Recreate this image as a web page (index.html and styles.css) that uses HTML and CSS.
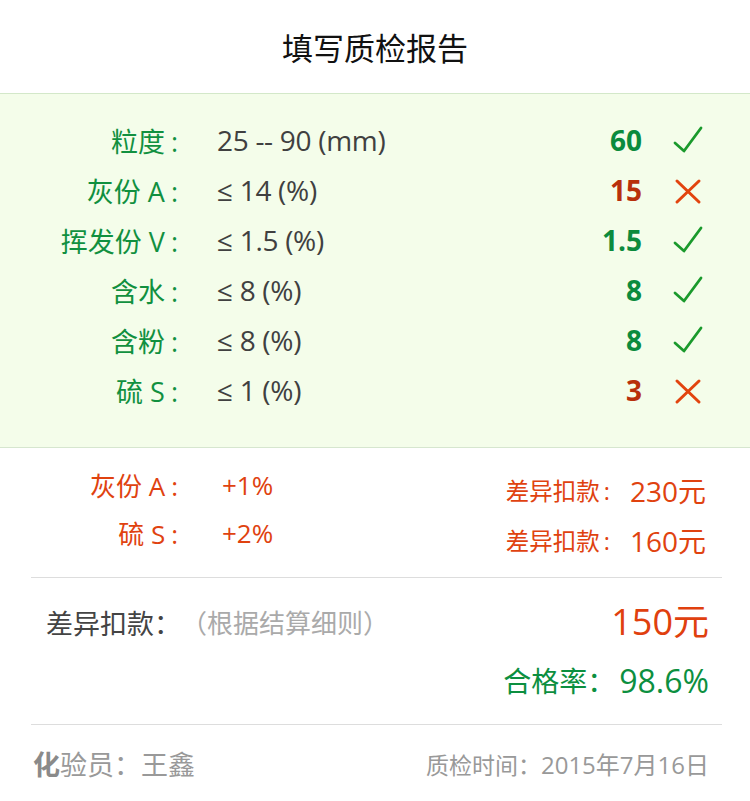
FILE: index.html
```html
<!DOCTYPE html>
<html lang="zh">
<head>
<meta charset="utf-8">
<link rel="stylesheet" href="styles.css">
</head>
<body>
<div class="page">
  <header class="title-bar">填写质检报告</header>

  <section class="checks">
    <div class="row">
      <span class="lbl">粒度<i>:</i></span><span class="std">25 -- 90 (mm)</span><span class="res ok">60</span>
      <svg class="ico" viewBox="0 0 32 32"><path class="ck" d="M3 19 L12 27 L29 4"/></svg>
    </div>
    <div class="row">
      <span class="lbl">灰份 A<i>:</i></span><span class="std">≤ 14 (%)</span><span class="res bad">15</span>
      <svg class="ico" viewBox="0 0 32 32"><path class="x" d="M5 7 L27 28 M27 7 L5 28"/></svg>
    </div>
    <div class="row">
      <span class="lbl">挥发份 V<i>:</i></span><span class="std">≤ 1.5 (%)</span><span class="res ok">1.5</span>
      <svg class="ico" viewBox="0 0 32 32"><path class="ck" d="M3 19 L12 27 L29 4"/></svg>
    </div>
    <div class="row">
      <span class="lbl">含水<i>:</i></span><span class="std">≤ 8 (%)</span><span class="res ok">8</span>
      <svg class="ico" viewBox="0 0 32 32"><path class="ck" d="M3 19 L12 27 L29 4"/></svg>
    </div>
    <div class="row">
      <span class="lbl">含粉<i>:</i></span><span class="std">≤ 8 (%)</span><span class="res ok">8</span>
      <svg class="ico" viewBox="0 0 32 32"><path class="ck" d="M3 19 L12 27 L29 4"/></svg>
    </div>
    <div class="row">
      <span class="lbl">硫 S<i>:</i></span><span class="std">≤ 1 (%)</span><span class="res bad">3</span>
      <svg class="ico" viewBox="0 0 32 32"><path class="x" d="M5 7 L27 28 M27 7 L5 28"/></svg>
    </div>
  </section>

  <section class="diffs">
    <div class="diff-left">
      <div class="drow"><span class="dlbl">灰份 A<i>:</i></span><span class="dval">+1%</span></div>
      <div class="drow"><span class="dlbl">硫 S<i>:</i></span><span class="dval">+2%</span></div>
    </div>
    <div class="diff-right">
      <div class="mrow"><span class="mlbl">差异扣款<i>:</i></span><span class="mval">230元</span></div>
      <div class="mrow"><span class="mlbl">差异扣款<i>:</i></span><span class="mval">160元</span></div>
    </div>
  </section>

  <section class="total">
    <div class="trow">
      <span class="tlbl">差异扣款：</span><span class="tnote">（根据结算细则）</span>
      <span class="tval">150元</span>
    </div>
    <div class="rate"><span class="rlbl">合格率：</span><span class="rval">98.6%</span></div>
  </section>

  <footer class="foot">
    <span class="inspector"><b>化</b>验员：王鑫</span>
    <span class="time">质检时间：<span class="date">2015年7月16日</span></span>
  </footer>
</div>
</body>
</html>
```

FILE: styles.css
```css
html, body {
  margin: 0;
  padding: 0;
  background: #ffffff;
}
body {
  font-family: "Open Sans", "Noto Sans CJK SC", sans-serif;
}
.page {
  width: 750px;
}
.title-bar {
  height: 93px;
  display: flex;
  align-items: center;
  justify-content: center;
  font-family: "Noto Sans CJK SC", sans-serif;
  font-size: 31px;
  color: #111;
  border-bottom: 1px solid #d3e8c9;
}
.checks {
  background: #f4fdea;
  padding: 21px 0 32px;
  border-bottom: 1px solid #d6e6cf;
}
.row {
  height: 50px;
  display: flex;
  align-items: center;
}
.lbl {
  width: 178px;
  text-align: right;
  font-size: 27px;
  color: #11903f;
}
.lbl i, .dlbl i, .mlbl i {
  font-style: normal;
  margin-left: 6px;
}
.std {
  margin-left: 39px;
  width: 300px;
  font-size: 28px;
  color: #404040;
  letter-spacing: -0.3px;
}
.res {
  width: 125px;
  text-align: right;
  font-size: 28px;
  font-weight: 700;
}
.res.ok { color: #0b8b3d; }
.res.bad { color: #b8300c; }
.ico {
  width: 32px;
  height: 32px;
  margin-left: 30px;
}
.ck {
  fill: none;
  stroke: #1a9a2c;
  stroke-width: 2.8;
  stroke-linecap: round;
  stroke-linejoin: round;
}
.x {
  fill: none;
  stroke: #e2440f;
  stroke-width: 3;
  stroke-linecap: round;
}
.diffs {
  display: flex;
  justify-content: space-between;
  margin: 0 28px 0 31px;
  padding: 13px 16px 12px 0;
  border-bottom: 1px solid #dddddd;
  color: #e0420f;
}
.diff-left {
  display: flex;
  flex-direction: column;
}
.drow {
  height: 48px;
  display: flex;
  align-items: center;
}
.dlbl {
  width: 147px;
  text-align: right;
  font-size: 26px;
}
.dval {
  margin-left: 44px;
  font-size: 26px;
}
.diff-right {
  display: flex;
  flex-direction: column;
  padding-top: 4px;
}
.mrow {
  height: 50px;
  display: flex;
  align-items: center;
  justify-content: flex-end;
}
.mlbl {
  font-size: 23.5px;
}
.mlbl i {
  margin-left: 4px;
}
.mval {
  margin-left: 20px;
  font-size: 28px;
}
.total {
  margin: 0 28px 0 31px;
  padding: 18px 13px 12px 15px;
  border-bottom: 1px solid #dddddd;
}
.trow {
  display: flex;
  align-items: center;
  height: 52px;
}
.tlbl {
  font-size: 27px;
  color: #444;
}
.tnote {
  font-size: 26px;
  color: #aaaaaa;
}
.tval {
  margin-left: auto;
  margin-bottom: 6px;
  font-size: 36px;
  color: #e0400e;
}
.rate {
  display: flex;
  justify-content: flex-end;
  align-items: center;
  height: 64px;
  color: #0c8f40;
}
.rlbl {
  font-size: 28px;
}
.rval {
  margin-left: 4px;
  font-size: 32px;
}
.foot {
  display: flex;
  justify-content: space-between;
  align-items: center;
  margin: 0 41px 0 33px;
  height: 76px;
  color: #999999;
}
.inspector {
  font-size: 27px;
}
.inspector b {
  font-weight: 700;
  color: #8a8a8a;
}
.time {
  font-size: 23px;
}
.date {
  font-size: 24px;
}
```
